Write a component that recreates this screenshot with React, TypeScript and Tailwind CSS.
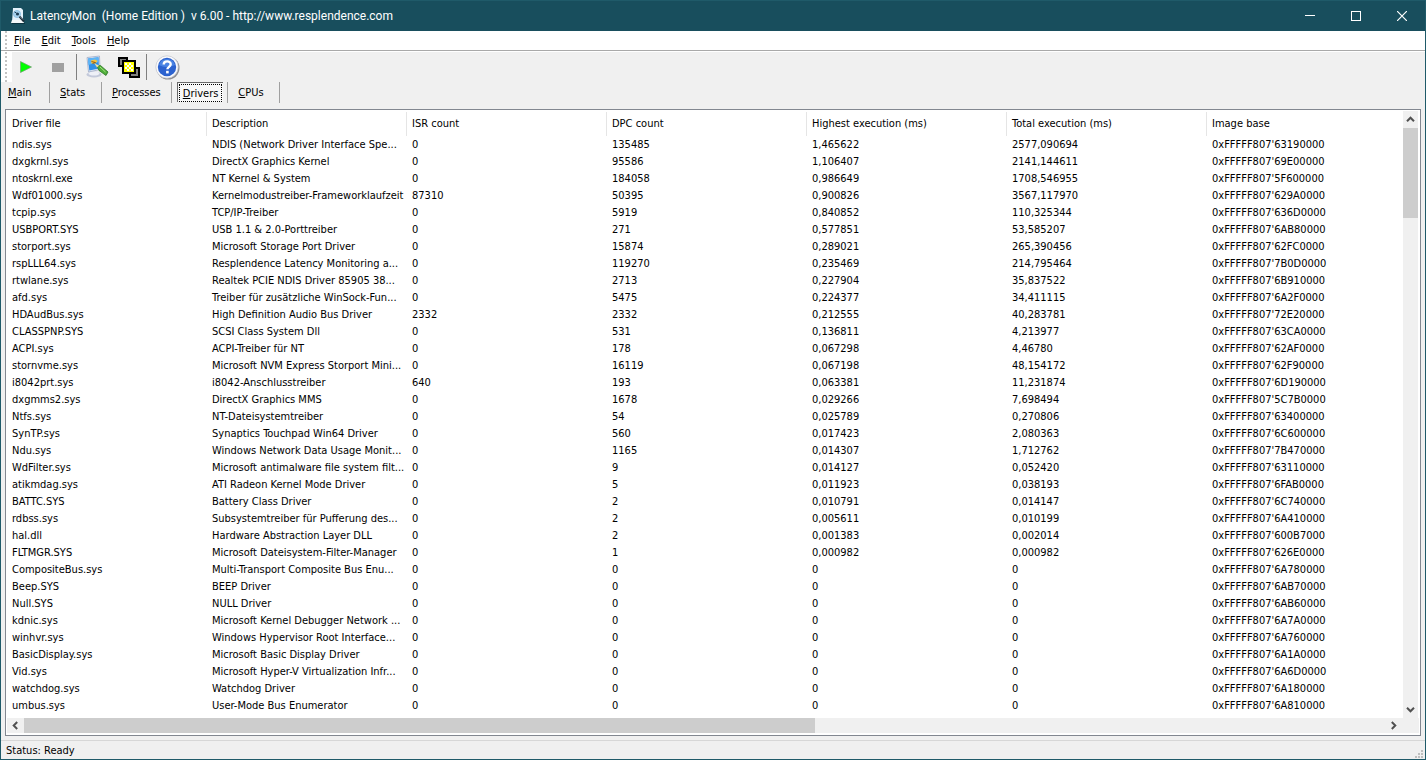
import { ReactNode } from "react";

const columns = [
    "Driver file",
    "Description",
    "ISR count",
    "DPC count",
    "Highest execution (ms)",
    "Total execution (ms)",
    "Image base",
];

const drivers = [
    ["ndis.sys", "NDIS (Network Driver Interface Spe...", "0", "135485", "1,465622", "2577,090694", "0xFFFFF807'63190000"],
    ["dxgkrnl.sys", "DirectX Graphics Kernel", "0", "95586", "1,106407", "2141,144611", "0xFFFFF807'69E00000"],
    ["ntoskrnl.exe", "NT Kernel & System", "0", "184058", "0,986649", "1708,546955", "0xFFFFF807'5F600000"],
    ["Wdf01000.sys", "Kernelmodustreiber-Frameworklaufzeit", "87310", "50395", "0,900826", "3567,117970", "0xFFFFF807'629A0000"],
    ["tcpip.sys", "TCP/IP-Treiber", "0", "5919", "0,840852", "110,325344", "0xFFFFF807'636D0000"],
    ["USBPORT.SYS", "USB 1.1 & 2.0-Porttreiber", "0", "271", "0,577851", "53,585207", "0xFFFFF807'6AB80000"],
    ["storport.sys", "Microsoft Storage Port Driver", "0", "15874", "0,289021", "265,390456", "0xFFFFF807'62FC0000"],
    ["rspLLL64.sys", "Resplendence Latency Monitoring a...", "0", "119270", "0,235469", "214,795464", "0xFFFFF807'7B0D0000"],
    ["rtwlane.sys", "Realtek PCIE NDIS Driver 85905 38...", "0", "2713", "0,227904", "35,837522", "0xFFFFF807'6B910000"],
    ["afd.sys", "Treiber für zusätzliche WinSock-Fun...", "0", "5475", "0,224377", "34,411115", "0xFFFFF807'6A2F0000"],
    ["HDAudBus.sys", "High Definition Audio Bus Driver", "2332", "2332", "0,212555", "40,283781", "0xFFFFF807'72E20000"],
    ["CLASSPNP.SYS", "SCSI Class System Dll", "0", "531", "0,136811", "4,213977", "0xFFFFF807'63CA0000"],
    ["ACPI.sys", "ACPI-Treiber für NT", "0", "178", "0,067298", "4,46780", "0xFFFFF807'62AF0000"],
    ["stornvme.sys", "Microsoft NVM Express Storport Mini...", "0", "16119", "0,067198", "48,154172", "0xFFFFF807'62F90000"],
    ["i8042prt.sys", "i8042-Anschlusstreiber", "640", "193", "0,063381", "11,231874", "0xFFFFF807'6D190000"],
    ["dxgmms2.sys", "DirectX Graphics MMS", "0", "1678", "0,029266", "7,698494", "0xFFFFF807'5C7B0000"],
    ["Ntfs.sys", "NT-Dateisystemtreiber", "0", "54", "0,025789", "0,270806", "0xFFFFF807'63400000"],
    ["SynTP.sys", "Synaptics Touchpad Win64 Driver", "0", "560", "0,017423", "2,080363", "0xFFFFF807'6C600000"],
    ["Ndu.sys", "Windows Network Data Usage Monit...", "0", "1165", "0,014307", "1,712762", "0xFFFFF807'7B470000"],
    ["WdFilter.sys", "Microsoft antimalware file system filt...", "0", "9", "0,014127", "0,052420", "0xFFFFF807'63110000"],
    ["atikmdag.sys", "ATI Radeon Kernel Mode Driver", "0", "5", "0,011923", "0,038193", "0xFFFFF807'6FAB0000"],
    ["BATTC.SYS", "Battery Class Driver", "0", "2", "0,010791", "0,014147", "0xFFFFF807'6C740000"],
    ["rdbss.sys", "Subsystemtreiber für Pufferung des...", "0", "2", "0,005611", "0,010199", "0xFFFFF807'6A410000"],
    ["hal.dll", "Hardware Abstraction Layer DLL", "0", "2", "0,001383", "0,002014", "0xFFFFF807'600B7000"],
    ["FLTMGR.SYS", "Microsoft Dateisystem-Filter-Manager", "0", "1", "0,000982", "0,000982", "0xFFFFF807'626E0000"],
    ["CompositeBus.sys", "Multi-Transport Composite Bus Enu...", "0", "0", "0", "0", "0xFFFFF807'6A780000"],
    ["Beep.SYS", "BEEP Driver", "0", "0", "0", "0", "0xFFFFF807'6AB70000"],
    ["Null.SYS", "NULL Driver", "0", "0", "0", "0", "0xFFFFF807'6AB60000"],
    ["kdnic.sys", "Microsoft Kernel Debugger Network ...", "0", "0", "0", "0", "0xFFFFF807'6A7A0000"],
    ["winhvr.sys", "Windows Hypervisor Root Interface...", "0", "0", "0", "0", "0xFFFFF807'6A760000"],
    ["BasicDisplay.sys", "Microsoft Basic Display Driver", "0", "0", "0", "0", "0xFFFFF807'6A1A0000"],
    ["Vid.sys", "Microsoft Hyper-V Virtualization Infr...", "0", "0", "0", "0", "0xFFFFF807'6A6D0000"],
    ["watchdog.sys", "Watchdog Driver", "0", "0", "0", "0", "0xFFFFF807'6A180000"],
    ["umbus.sys", "User-Mode Bus Enumerator", "0", "0", "0", "0", "0xFFFFF807'6A810000"],
];

const menus = ["File", "Edit", "Tools", "Help"];
const tabs = ["Main", "Stats", "Processes", "Drivers", "CPUs"];

// first letter is the keyboard shortcut
function Mnemonic({ text }: { text: string }) {
    return (
        <span>
            <span className="underline underline-offset-1">{text[0]}</span>
            {text.slice(1)}
        </span>
    );
}

function ToolButton({ label, className, children }: { label: string; className: string; children: ReactNode }) {
    return (
        <button type="button" aria-label={label} className={`flex h-7 items-center justify-center ${className}`}>
            {children}
        </button>
    );
}

function Grip({ className }: { className: string }) {
    return (
        <svg className={className} width="2" height="100%" aria-hidden="true">
            <defs>
                <pattern id="grip" width="2" height="4" patternUnits="userSpaceOnUse">
                    <rect width="2" height="2" fill="#c3c3c3" />
                </pattern>
            </defs>
            <rect width="2" height="100%" fill="url(#grip)" />
        </svg>
    );
}

function AppIcon() {
    return (
        <svg width="15" height="16" viewBox="0 0 15 16" aria-hidden="true">
            <path d="M2 0h8l2 2v12H1z" fill="#e4f2fb" />
            <path d="M1 12h11l1 3H0z" fill="#f5f8fa" />
            <path d="M1 15h13v1H1z" fill="#0d3440" />
            <circle cx="6" cy="6" r="3.5" fill="#a9d3ee" stroke="#8fc4e6" />
            <circle cx="6.5" cy="6" r="1.6" fill="#1d3e55" />
            <path d="M3.5 4l2 1" stroke="#1d3e55" />
            <path d="M8.5 8.500l4.500 5" stroke="#1b2c38" strokeWidth="2" />
            <path d="M9 8.500l3 3" stroke="#8a9aa5" strokeWidth="1" />
        </svg>
    );
}

function MonitorIcon() {
    return (
        <svg width="24" height="24" viewBox="0 0 24 24" aria-hidden="true">
            <ellipse cx="9" cy="19.5" rx="7.5" ry="3" fill="#c3c9da" />
            <ellipse cx="9" cy="18.5" rx="5.5" ry="2" fill="#eef0f7" />
            <path d="M2 2.500L14.500 1 15 14.500 3.500 17z" fill="#e3e9f4" stroke="#9eabc8" strokeWidth=".8" />
            <path d="M3 3.500l10.500-1.300.500 11.300-9.700 2z" fill="#2f8fe6" />
            <path d="M3 3.500l10.500-1.300.200 4.800-10.400 3z" fill="#5db4f5" />
            <path d="M6 5.500l4-1 2.500 1.500-2 2.500H6.500z" fill="#f7c23c" />
            <path d="M6.500 6.500l4 1-3 1" stroke="#7a4c10" strokeWidth=".8" fill="none" />
            <path d="M12 11l3.500-.5 7.500 6.500-2 3.500-7-5z" fill="#4fae3a" stroke="#2c7426" strokeWidth=".8" />
            <path d="M9.500 8.500l4.500 2-2 2z" fill="#f1e2a5" />
            <path d="M15 12l5.500 5" stroke="#a4e27c" strokeWidth="1" />
        </svg>
    );
}

function SquaresIcon() {
    return (
        <svg width="22" height="21" viewBox="0 0 22 21" shapeRendering="crispEdges" aria-hidden="true">
            <defs>
                <pattern id="dither" x="7" y="6" width="4" height="4" patternUnits="userSpaceOnUse">
                    <rect width="4" height="4" fill="#ffff00" />
                    <rect width="2" height="2" fill="#ffffff" />
                    <rect x="2" y="2" width="2" height="2" fill="#ffffff" />
                </pattern>
            </defs>
            <rect x="1" y="1" width="8" height="8" fill="#808080" stroke="#000" strokeWidth="2" />
            <rect x="12" y="11" width="9" height="9" fill="#808080" stroke="#000" strokeWidth="2" />
            <rect x="5" y="4" width="12" height="12" fill="#ffff00" stroke="#000" strokeWidth="2" />
            <rect x="7" y="6" width="8" height="8" fill="url(#dither)" />
        </svg>
    );
}

function HelpIcon() {
    return (
        <svg width="25" height="25" viewBox="0 0 25 25" aria-hidden="true">
            <circle cx="13" cy="13" r="11.5" fill="#8f8f93" />
            <circle cx="12" cy="12" r="11.2" fill="#fafafc" stroke="#c2c4cc" strokeWidth=".7" />
            <circle cx="12" cy="12" r="9.2" fill="#2c62cf" />
            <path d="M4 10a8.3 8.3 0 0 1 16 0c-4 2-11 3-16 0z" fill="#4b84e4" />
            <path
                d="M8.7 9.5C8.7 5.400 15.700 5.400 15.700 9.300c0 2.500-3.300 2.600-3.300 5"
                fill="none"
                stroke="#fff"
                strokeWidth="2.400"
            />
            <rect x="11.100" y="15.800" width="2.600" height="2.600" fill="#fff" />
        </svg>
    );
}

function Chevron({ className }: { className?: string }) {
    return (
        <svg className={className} width="9" height="9" viewBox="0 0 9 9" aria-hidden="true">
            <path d="M1 6.200L4.500 2.700 8 6.200" fill="none" stroke="#505050" strokeWidth="2" />
        </svg>
    );
}

export default function App() {
    return (
        <div className="flex h-screen flex-col overflow-hidden border border-[#1f5a69] bg-[#f0f0f0] font-['DejaVu_Sans_Condensed','DejaVu_Sans',sans-serif] text-[11px] text-black">
            {/* TITLE BAR */}
            <header className="flex h-[30px] shrink-0 items-center bg-[#184e5d] pl-[10px] text-white">
                <AppIcon />
                <h1 className="ml-1 flex-1 whitespace-pre font-['Roboto','Noto_Sans',sans-serif] text-[12px]">
                    {"LatencyMon  (Home Edition )  v 6.00 - http://www.resplendence.com"}
                </h1>
                <button type="button" aria-label="Minimize" className="flex h-full w-[46px] items-center justify-center">
                    <svg width="10" height="10"><path d="M0 4.500h10" stroke="#fff" /></svg>
                </button>
                <button type="button" aria-label="Maximize" className="flex h-full w-[46px] items-center justify-center">
                    <svg width="10" height="10"><rect x=".5" y=".5" width="9" height="9" fill="none" stroke="#fff" /></svg>
                </button>
                <button type="button" aria-label="Close" className="flex h-full w-[46px] items-center justify-center">
                    <svg width="10" height="10"><path d="M0 0l10 10M10 0L0 10" stroke="#fff" strokeWidth="1.200" /></svg>
                </button>
            </header>

            {/* MENU */}
            <nav className="flex h-5 shrink-0 items-center border-b border-[#a9a9a9] bg-white">
                <Grip className="ml-1" />
                <div className="flex gap-[11px] pt-[2px] pl-[7px]">
                    {menus.map((menu) => (
                        <button key={menu} type="button">
                            <Mnemonic text={menu} />
                        </button>
                    ))}
                </div>
            </nav>

            {/* TOOLBAR */}
            <div className="flex h-[31px] shrink-0 items-center border-t border-white">
                <div className="flex h-full w-[11px] bg-white">
                    <Grip className="ml-1" />
                </div>
                <ToolButton label="Start" className="w-7">
                    <svg width="12" height="12">
                        <path d="M.5.500v11L11.500 6z" fill="#00ff00" stroke="#6f9f6f" strokeWidth=".7" />
                    </svg>
                </ToolButton>
                <ToolButton label="Stop" className="w-9">
                    <span className="h-[9px] w-3 bg-[#a0a0a0]" />
                </ToolButton>
                <span className="h-[26px] w-px bg-[#808080]" />
                <ToolButton label="Monitor options" className="w-[39px]">
                    <MonitorIcon />
                </ToolButton>
                <ToolButton label="Windows" className="mr-1 w-[26px]">
                    <SquaresIcon />
                </ToolButton>
                <span className="h-[26px] w-px bg-[#808080]" />
                <ToolButton label="Help" className="w-[41px]">
                    <HelpIcon />
                </ToolButton>
            </div>

            {/* TABS */}
            <div role="tablist" className="flex h-[21px] shrink-0">
                {tabs.map((tab) =>
                    tab === "Drivers" ? (
                        <div key={tab} className="border-r border-[#a0a0a0] pr-1 pl-[5px]">
                            <button
                                type="button"
                                role="tab"
                                aria-selected="true"
                                className="block h-5 border-t border-l border-[#696969] bg-[#f8f8f8] p-px"
                            >
                                <span className="block border border-dotted border-black px-[3px] pt-px leading-[15px]">
                                    <Mnemonic text={tab} />
                                </span>
                            </button>
                        </div>
                    ) : (
                        <button
                            key={tab}
                            type="button"
                            role="tab"
                            aria-selected="false"
                            className="min-w-[52px] border-r border-[#a0a0a0] pt-px pr-[10px] pl-[10px] text-left first:min-w-[49px] first:pl-[7px]"
                        >
                            <Mnemonic text={tab} />
                        </button>
                    )
                )}
            </div>

            {/* DRIVER LIST */}
            <main className="mx-1 mt-[6px] flex min-h-0 flex-1 flex-col border border-[#828790] bg-white p-px">
                <div className="flex min-h-0 flex-1">
                    <div className="min-w-0 flex-1 overflow-hidden pt-px">
                        <table className="w-full table-fixed border-separate border-spacing-0 text-left">
                            <thead>
                                <tr className="h-6">
                                    {columns.map((column) => (
                                        <th
                                            key={column}
                                            className="w-[200px] border-r border-[#e5e5e5] p-0 pl-[5px] font-normal whitespace-nowrap last:w-auto last:border-r-0"
                                        >
                                            {column}
                                        </th>
                                    ))}
                                </tr>
                            </thead>
                            <tbody>
                                {drivers.map((driver) => (
                                    <tr key={driver[0]} className="h-[17px]">
                                        {driver.map((value, i) => (
                                            <td key={i} className="p-0 pl-[5px] leading-[17px] whitespace-nowrap">
                                                {value}
                                            </td>
                                        ))}
                                    </tr>
                                ))}
                            </tbody>
                        </table>
                    </div>
                    <div className="mr-px flex w-[15px] flex-col items-center bg-[#f0f0f0]">
                        <span className="flex h-[17px] items-center">
                            <Chevron />
                        </span>
                        <span className="h-[90px] w-full bg-[#cdcdcd]" />
                        <span className="mt-auto flex h-[17px] items-center">
                            <Chevron className="rotate-180" />
                        </span>
                    </div>
                </div>
                <div className="mb-px flex h-[15px] shrink-0 items-center bg-[#f0f0f0] pr-[17px]">
                    <span className="flex w-[17px] justify-center">
                        <Chevron className="-rotate-90" />
                    </span>
                    <span className="h-full w-17/30 bg-[#cdcdcd]" />
                    <span className="ml-auto flex w-[17px] justify-center">
                        <Chevron className="rotate-90" />
                    </span>
                </div>
            </main>

            {/* STATUS BAR */}
            <footer className="mt-1 flex h-[19px] shrink-0 items-end justify-between border-t border-[#d7d7d7] pl-[5px]">
                <span className="leading-4">Status: Ready</span>
                <svg className="mr-[2px] mb-px" width="8" height="8" fill="#bfbfbf" aria-hidden="true">
                    <path d="M6 0h2v2H6zM3 3h2v2H3zM6 3h2v2H6zM0 6h2v2H0zM3 6h2v2H3zM6 6h2v2H6z" />
                </svg>
            </footer>
        </div>
    );
}
